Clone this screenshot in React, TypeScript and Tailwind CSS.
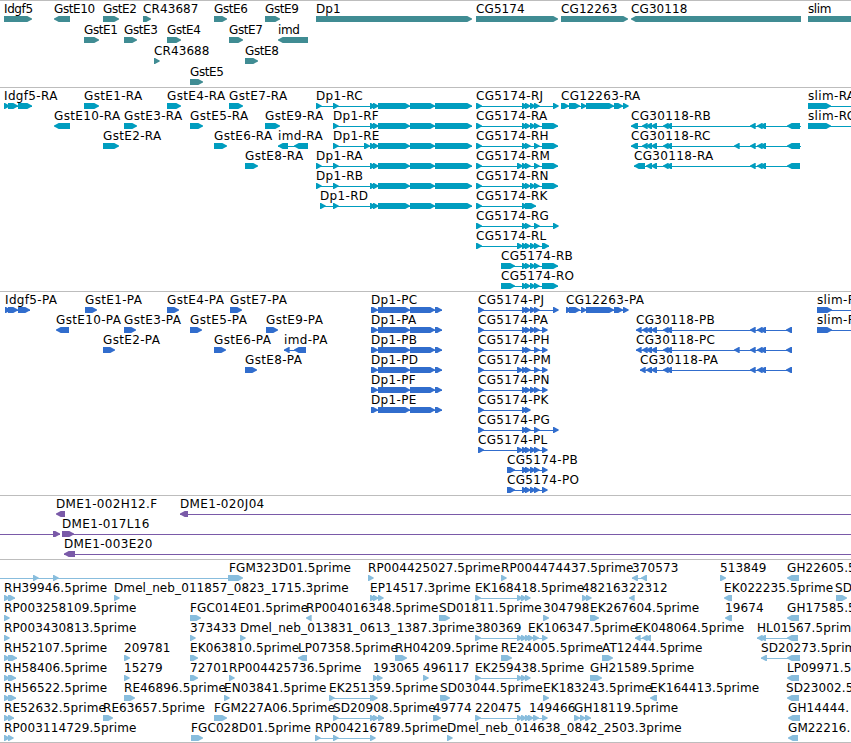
type Span = [number, number]

type FeatureType = {
  row: number
  x: number
  label: string
  parts: Span[]
  reverse?: boolean
  line?: Span
}

type TrackType = {
  name: string
  height: number
  rowHeight: number
  color: string
  features: FeatureType[]
}

// forward and reverse strand features
const fwd = (row: number, x: number, label: string, parts: Span[], line?: Span): FeatureType => ({ row, x, label, parts, line })
const rev = (row: number, x: number, label: string, parts: Span[], line?: Span): FeatureType => ({ row, x, label, parts, line, reverse: true })

const END = 851

// exons shared between isoforms
const dp1: Span[] = [[370, 375], [373, 378], [378, 410], [410, 435], [435, 472]]
const dp1Coding: Span[] = [[371, 378], [378, 410], [410, 435], [435, 442]]
const a: Span = [517, 523]
const b: Span = [522, 527]
const c: Span = [525, 530]
const d: Span = [530, 535]
const e: Span = [534, 539]
const utr: Span = [542, 558]
const tail: Span = [553, 558]
const stop: Span = [542, 547]
const first: Span = [476, 482]
const firstCoding: Span = [478, 484]
const cg12263: Span[] = [[569, 580], [581, 586], [586, 614], [614, 623], [623, 628]]
const cg30118: Span[] = [[646, 652], [651, 657], [663, 668], [666, 672], [750, 755], [757, 762], [760, 766]]

const genes: FeatureType[] = [
  fwd(0, 4, "Idgf5", [[4, 32]]),
  rev(0, 54, "GstE10", [[54, 70]]),
  fwd(0, 103, "GstE2", [[103, 119]]),
  fwd(0, 143, "CR43687", [[143, 151]]),
  fwd(0, 214, "GstE6", [[214, 227]]),
  fwd(0, 265, "GstE9", [[265, 280]]),
  fwd(0, 316, "Dp1", [[316, 472]]),
  fwd(0, 476, "CG5174", [[476, 558]]),
  fwd(0, 561, "CG12263", [[561, 628]]),
  rev(0, 631, "CG30118", [[631, 801]]),
  fwd(0, 808, "slim", [[808, 870]]),
  fwd(1, 84, "GstE1", [[84, 99]]),
  fwd(1, 124, "GstE3", [[124, 137]]),
  fwd(1, 167, "GstE4", [[167, 181]]),
  fwd(1, 229, "GstE7", [[229, 243]]),
  rev(1, 278, "imd", [[278, 308]]),
  fwd(2, 154, "CR43688", [[154, 159]]),
  fwd(2, 245, "GstE8", [[245, 258]]),
  fwd(3, 190, "GstE5", [[190, 203]]),
]

const transcripts: FeatureType[] = [
  fwd(0, 4, "Idgf5-RA", [[4, 8], [8, 18], [18, 32]]),
  fwd(0, 84, "GstE1-RA", [[84, 99]]),
  fwd(0, 167, "GstE4-RA", [[167, 181]]),
  fwd(0, 229, "GstE7-RA", [[229, 243]]),
  fwd(0, 316, "Dp1-RC", [[316, 321], [333, 338], ...dp1]),
  fwd(0, 476, "CG5174-RJ", [first, b, c, d, e, tail]),
  fwd(0, 561, "CG12263-RA", [[561, 569], ...cg12263]),
  fwd(0, 808, "slim-RA", [[808, 831]], [808, END]),
  rev(1, 54, "GstE10-RA", [[54, 70]]),
  fwd(1, 124, "GstE3-RA", [[124, 137]]),
  fwd(1, 190, "GstE5-RA", [[190, 203]]),
  fwd(1, 265, "GstE9-RA", [[265, 280]]),
  fwd(1, 333, "Dp1-RF", [[333, 338], ...dp1]),
  fwd(1, 476, "CG5174-RA", [first, b, c, d, e, utr]),
  rev(1, 631, "CG30118-RB", [[631, 638], [642, 647], ...cg30118, [787, 800]], [631, 801]),
  fwd(1, 808, "slim-RC", [[808, 831]], [808, END]),
  fwd(2, 103, "GstE2-RA", [[103, 119]]),
  fwd(2, 214, "GstE6-RA", [[214, 227]]),
  rev(2, 278, "imd-RA", [[278, 288], [294, 308]]),
  fwd(2, 333, "Dp1-RE", [[333, 338], [364, 370], ...dp1]),
  fwd(2, 476, "CG5174-RH", [first, b, c, e, utr]),
  rev(2, 631, "CG30118-RC", [[631, 638], [642, 647], ...cg30118, [734, 739], [787, 800]], [631, 801]),
  fwd(3, 245, "GstE8-RA", [[245, 258]]),
  fwd(3, 316, "Dp1-RA", [[316, 321], [333, 338], ...dp1]),
  fwd(3, 476, "CG5174-RM", [first, a, b, c, e, utr]),
  rev(3, 634, "CG30118-RA", [[634, 645], ...cg30118, [787, 800]]),
  fwd(4, 316, "Dp1-RB", [[316, 321], [333, 338], ...dp1]),
  fwd(4, 476, "CG5174-RN", [first, b, c, d, e, utr]),
  fwd(5, 320, "Dp1-RD", [[320, 325], [333, 338], ...dp1]),
  fwd(5, 476, "CG5174-RK", [first, b, [525, 536]]),
  fwd(6, 476, "CG5174-RG", [first, b, c, e, tail]),
  fwd(7, 476, "CG5174-RL", [first, a, b, c, d, e, [542, 549]]),
  fwd(8, 501, "CG5174-RB", [[501, 515], b, c, d, e, utr]),
  fwd(9, 501, "CG5174-RO", [[501, 515], b, c, d, e, utr]),
]

const proteins: FeatureType[] = [
  fwd(0, 5, "Idgf5-PA", [[5, 8], [8, 18], [18, 30]]),
  fwd(0, 85, "GstE1-PA", [[85, 97]]),
  fwd(0, 167, "GstE4-PA", [[167, 179]]),
  fwd(0, 230, "GstE7-PA", [[230, 242]]),
  fwd(0, 371, "Dp1-PC", dp1Coding),
  fwd(0, 478, "CG5174-PJ", [firstCoding, b, c, d, e, tail]),
  fwd(0, 566, "CG12263-PA", [[566, 569], ...cg12263]),
  fwd(0, 817, "slim-PA", [[817, 832]], [817, END]),
  rev(1, 56, "GstE10-PA", [[56, 69]]),
  fwd(1, 124, "GstE3-PA", [[124, 136]]),
  fwd(1, 190, "GstE5-PA", [[190, 202]]),
  fwd(1, 266, "GstE9-PA", [[266, 278]]),
  fwd(1, 371, "Dp1-PA", dp1Coding),
  fwd(1, 478, "CG5174-PA", [firstCoding, b, c, d, e, stop]),
  rev(1, 636, "CG30118-PB", [[636, 641], [642, 647], ...cg30118, [786, 792]]),
  fwd(1, 817, "slim-PC", [[817, 832]], [817, END]),
  fwd(2, 103, "GstE2-PA", [[103, 115]]),
  fwd(2, 214, "GstE6-PA", [[214, 226]]),
  rev(2, 284, "imd-PA", [[284, 289], [294, 306]]),
  fwd(2, 371, "Dp1-PB", dp1Coding),
  fwd(2, 478, "CG5174-PH", [firstCoding, b, c, e, stop]),
  rev(2, 636, "CG30118-PC", [[636, 641], [642, 647], ...cg30118, [734, 739], [786, 792]]),
  fwd(3, 245, "GstE8-PA", [[245, 257]]),
  fwd(3, 371, "Dp1-PD", dp1Coding),
  fwd(3, 478, "CG5174-PM", [firstCoding, a, b, c, e, stop]),
  rev(3, 640, "CG30118-PA", [[640, 645], ...cg30118, [786, 792]]),
  fwd(4, 371, "Dp1-PF", dp1Coding),
  fwd(4, 478, "CG5174-PN", [firstCoding, b, c, d, e, stop]),
  fwd(5, 371, "Dp1-PE", dp1Coding),
  fwd(5, 478, "CG5174-PK", [firstCoding, b, c]),
  fwd(6, 478, "CG5174-PG", [firstCoding, b, c, e, tail]),
  fwd(7, 478, "CG5174-PL", [firstCoding, a, b, c, d, e, stop]),
  fwd(8, 507, "CG5174-PB", [[507, 515], b, c, d, e, stop]),
  fwd(9, 507, "CG5174-PO", [[507, 515], b, c, d, e, stop]),
]

const clones: FeatureType[] = [
  rev(0, 56, "DME1-002H12.F", [[56, 65]]),
  rev(0, 180, "DME1-020J04", [[180, 188]], [180, END]),
  fwd(1, 0, "", [[53, 60]], [0, 60]),
  fwd(1, 62, "DME1-017L16", [[62, 74]], [62, END]),
  rev(2, 64, "DME1-003E20", [[64, 75]], [64, END]),
]

const ests: FeatureType[] = [
  fwd(0, 229, "FGM323D01.5prime", [[33, 38], [53, 58], [228, 243]], [0, 240]),
  fwd(0, 368, "RP004425027.5prime", [[368, 373]]),
  fwd(0, 501, "RP004474437.5prime", [[501, 506]]),
  rev(0, 632, "370573", [[632, 638], [641, 647]]),
  fwd(0, 720, "513849", [[720, 726]]),
  rev(0, 787, "GH22605.5prime", [[787, 799]]),
  fwd(1, 4, "RH39946.5prime", [[4, 9], [8, 15]]),
  fwd(1, 114, "Dmel_neb_011857_0823_1715.3prime", [[114, 119]]),
  fwd(1, 370, "EP14517.3prime", [[370, 375], [373, 378], [378, 383]]),
  fwd(1, 475, "EK168418.5prime", [[475, 481], [517, 522], [521, 526], [525, 530]]),
  fwd(1, 582, "482163", [[582, 587], [586, 591]]),
  rev(1, 629, "22312", [[629, 634]]),
  rev(1, 724, "EK022235.5prime", [[724, 732]]),
  fwd(1, 835, "SD", [[836, 847]]),
  fwd(2, 4, "RP003258109.5prime", [[4, 9]]),
  fwd(2, 190, "FGC014E01.5prime", [[190, 201]]),
  rev(2, 306, "RP004016348.5prime", [[306, 311]]),
  fwd(2, 439, "SD01811.5prime", [[439, 450]]),
  fwd(2, 543, "304798", [[543, 549]]),
  fwd(2, 590, "EK267604.5prime", [[590, 599]]),
  rev(2, 725, "19674", [[725, 732]]),
  rev(2, 787, "GH17585.5prime", [[787, 799]]),
  fwd(3, 4, "RP003430813.5prime", [[4, 9]]),
  fwd(3, 190, "373433", [[190, 195]]),
  fwd(3, 240, "Dmel_neb_013831_0613_1387.3prime", [[240, 245]]),
  fwd(3, 475, "380369", [[475, 481], [517, 522], [521, 526], [525, 530]]),
  fwd(3, 528, "EK106347.5prime", [[528, 533], [533, 539], [542, 547]]),
  rev(3, 635, "EK048064.5prime", [[635, 640], [642, 647], [645, 651]]),
  rev(3, 757, "HL01567.5prime", [[757, 762], [760, 766], [787, 798]]),
  fwd(4, 4, "RH52107.5prime", [[4, 9], [8, 17]]),
  fwd(4, 124, "209781", [[124, 130]]),
  fwd(4, 190, "EK063810.5prime", [[190, 198]]),
  rev(4, 298, "LP07358.5prime", [[298, 307]]),
  fwd(4, 395, "RH04209.5prime", [[395, 407]]),
  fwd(4, 501, "RE24005.5prime", [[501, 512]]),
  fwd(4, 602, "AT12444.5prime", [[602, 613]]),
  rev(4, 761, "SD20273.5prime", [[761, 767], [787, 800]]),
  fwd(5, 4, "RH58406.5prime", [[4, 9], [8, 16]]),
  fwd(5, 124, "15279", [[124, 129]]),
  fwd(5, 190, "72701", [[190, 198]]),
  fwd(5, 229, "RP004425736.5prime", [[229, 234]]),
  fwd(5, 373, "193065", [[373, 378], [377, 382]]),
  fwd(5, 423, "496117", [[423, 428]]),
  fwd(5, 475, "EK259438.5prime", [[475, 481], [517, 522], [521, 526], [525, 530]]),
  fwd(5, 590, "GH21589.5prime", [[590, 602]]),
  rev(5, 787, "LP09971.5prime", [[787, 799]]),
  fwd(6, 4, "RH56522.5prime", [[4, 9], [8, 16]]),
  fwd(6, 124, "RE46896.5prime", [[124, 135]]),
  fwd(6, 224, "EN03841.5prime", [[224, 229]]),
  fwd(6, 329, "EK251359.5prime", [[329, 334], [370, 375], [372, 377]]),
  fwd(6, 440, "SD03044.5prime", [[440, 450]]),
  fwd(6, 543, "EK183243.5prime", [[543, 549]]),
  rev(6, 650, "EK164413.5prime", [[650, 657]]),
  rev(6, 786, "SD23002.5prime", [[787, 799]]),
  fwd(7, 4, "RE52632.5prime", [[4, 9], [8, 14]]),
  fwd(7, 103, "RE63657.5prime", [[103, 113]]),
  fwd(7, 214, "FGM227A06.5prime", [[214, 227]]),
  fwd(7, 333, "SD20908.5prime", [[333, 338], [370, 375], [373, 378], [378, 384]]),
  fwd(7, 433, "49774", [[433, 441]]),
  fwd(7, 475, "220475", [[475, 481], [517, 522], [521, 526], [525, 530]]),
  fwd(7, 529, "149466", [[528, 533], [533, 539], [542, 547]]),
  fwd(7, 574, "GH18119.5prime", [[574, 580], [580, 585], [585, 591]]),
  rev(7, 788, "GH14444.", [[788, 800]]),
  fwd(8, 4, "RP003114729.5prime", [[4, 9], [8, 13]]),
  fwd(8, 191, "FGC028D01.5prime", [[191, 203]]),
  fwd(8, 315, "RP004216789.5prime", [[315, 320], [333, 338], [370, 375]]),
  fwd(8, 447, "Dmel_neb_014638_0842_2503.3prime", [[447, 452]]),
  rev(8, 788, "GM22216.", [[788, 798]]),
]

const tracks: TrackType[] = [
  { name: "genes", height: 87, rowHeight: 21, color: "#408c93", features: genes },
  { name: "transcripts", height: 204, rowHeight: 20, color: "#009dbf", features: transcripts },
  { name: "proteins", height: 204, rowHeight: 20, color: "#316dcd", features: proteins },
  { name: "clones", height: 64, rowHeight: 20, color: "#7a5aa8", features: clones },
  { name: "ests", height: 183, rowHeight: 20, color: "#88bddd", features: ests },
]

// bar with a rounded-off point at the 3' end
const arrow = ([start, end]: Span, reverse?: boolean) => {
  const size = Math.max(end - start, 5.7)
  const head = Math.min(size, 5.7)
  const dir = reverse ? -1 : 1
  const back = reverse ? start + size : start
  const tip = back + dir * size
  const neck = tip - dir * head
  const mid = tip - dir * 2
  return `M${back} 0V6H${neck}L${neck + dir} 6L${mid} 4.4L${tip} 3.6V2.6L${mid} 1.6L${neck + dir} 0H${neck}Z`
}

const tracking = (label: string) => {
  if (label.includes("-")) return "tracking-[0.34px]"
  if (/^(Gst|Idgf|slim|imd)/.test(label)) return "tracking-[-0.4px]"
  return "tracking-[0.1px]"
}

const Feature = ({ feature, rowHeight }: { feature: FeatureType; rowHeight: number }) => {
  const { row, x, label, parts, reverse } = feature
  const [from, to] = feature.line ?? [parts[0][0], parts[parts.length - 1][1]]
  const left = Math.min(x, from)
  return (
    <div className="absolute" style={{ left, top: row * rowHeight }}>
      <div
        className={`h-[15px] pt-px text-[12px] leading-[14px] whitespace-nowrap text-black ${tracking(label)}`}
        style={{ paddingLeft: x - left }}
      >
        {label}
      </div>
      <svg className="absolute left-0 top-[15px] h-[6px] overflow-visible" width={1} height={6} fill="currentColor">
        <g transform={`translate(${-left} 0)`}>
          {parts.length > 1 || feature.line ? <rect x={from} y={3} width={to - from} height={1} /> : null}
          {parts.map((part, i) => (
            <path key={i} d={arrow(part, reverse)} />
          ))}
        </g>
      </svg>
    </div>
  )
}

const Track = ({ track }: { track: TrackType }) => (
  <section
    aria-label={track.name}
    className="relative w-full shrink-0 overflow-hidden border-t border-[#bdbdbd]"
    style={{ height: track.height, color: track.color }}
  >
    {track.features.map((feature, i) => (
      <Feature key={i} feature={feature} rowHeight={track.rowHeight} />
    ))}
  </section>
)

export default function App() {
  return (
    <main className="flex h-[743px] w-[851px] flex-col overflow-hidden bg-white font-['DejaVu_Sans',sans-serif]">
      {tracks.map((track) => (
        <Track key={track.name} track={track} />
      ))}
      <div className="h-px shrink-0 bg-[#bdbdbd]" />
    </main>
  )
}
